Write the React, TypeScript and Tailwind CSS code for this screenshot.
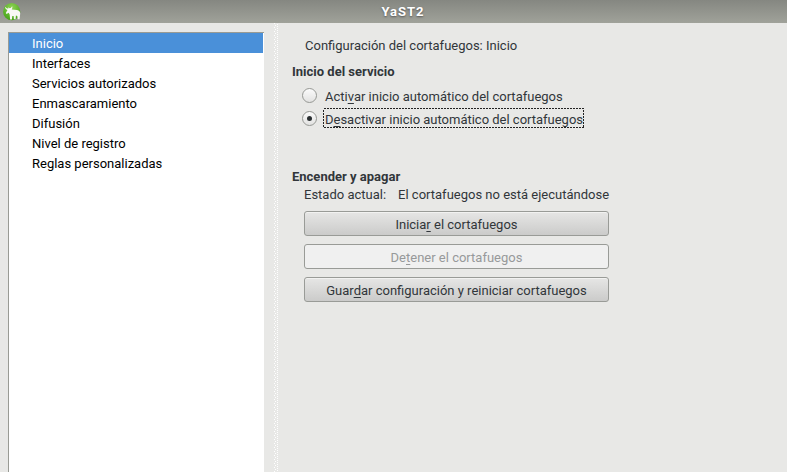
import type { ReactNode } from "react";

const items = [
  "Inicio",
  "Interfaces",
  "Servicios autorizados",
  "Enmascaramiento",
  "Difusión",
  "Nivel de registro",
  "Reglas personalizadas",
];

function Key({ children }: { children: ReactNode }) {
  return (
    <span className="underline decoration-1 underline-offset-2 [text-decoration-skip-ink:none]">{children}</span>
  );
}

function Radio({ checked }: { checked?: boolean }) {
  return (
    <span className="flex size-[15px] shrink-0 items-center justify-center rounded-full border border-[#969894] bg-linear-to-b from-[#fbfbfb] to-[#e2e2e1]">
      {checked && <span className="size-[5px] rounded-full bg-[#2a2f31]" />}
    </span>
  );
}

function Button({ children, disabled }: { children: ReactNode; disabled?: boolean }) {
  return (
    <button
      disabled={disabled}
      className={
        "flex h-[25px] w-[305px] items-center justify-center rounded-[3px] border border-[#999b97] pt-[2px] leading-5 " +
        (disabled
          ? "bg-[#f0f0f0] text-[#97999a]"
          : "bg-linear-to-b from-[#e6e6e5] to-[#cbcbca] shadow-[inset_0_1px_0_#f2f2f1]")
      }
    >
      <span>{children}</span>
    </button>
  );
}

function Logo() {
  return (
    <svg viewBox="0 0 18 18" className="size-[18px] shrink-0">
      <defs>
        <radialGradient id="green" cx=".5" cy=".25" r=".8">
          <stop offset="0" stopColor="#8fd055" />
          <stop offset=".6" stopColor="#5cb52a" />
          <stop offset="1" stopColor="#43a015" />
        </radialGradient>
      </defs>
      <circle cx="8.700" cy="8.700" r="8.600" fill="url(#green)" />
      <path
        fill="#f8f8f5"
        d="M2 3.800C3.200 5.100 4.300 5.600 5.400 5.600L5.300 4.200 6.600 5.200 7.800 5 9.200 3.200C9.500 4.500 9.300 5.700 8.600 6.500L14 6.900C16.200 7.200 17.200 8.600 17.200 10.600L16.600 16.300H14.700L14.300 12.900 12.900 12.600 12.600 16.300H10.900L10.600 13 9.300 12.900 8.900 16.500H7.100L6.700 11.600 5.600 9.800 3.600 11.100 2.800 10 4.500 7C3 6.400 2 5.300 2 3.800Z"
      />
    </svg>
  );
}

export default function App() {
  return (
    <div className="flex h-[472px] w-[787px] flex-col overflow-hidden bg-[#e8e8e6] font-[Roboto,sans-serif] text-[13px] leading-5 text-[#31363a]">
      <header className="flex h-[23px] shrink-0 items-center bg-linear-to-b from-[#858781] to-[#a0a29a] pl-[3px]">
        <Logo />
        <h1 className="flex-1 pr-[2px] text-center text-[13px] font-bold tracking-[1px] text-white [text-shadow:0_1px_2px_#555]">YaST2</h1>
      </header>
      <div className="flex min-h-0 flex-1">
        <nav className="mt-[9px] ml-2 w-[256px] border-t border-l border-[#999b94] bg-white text-black">
          {items.map((item, i) => (
            <div
              key={item}
              className={"h-5 pl-[23px] pt-px " + (i === 0 ? "mr-px bg-[#4a90d9] text-white" : "")}
            >
              {item}
            </div>
          ))}
        </nav>
        <svg className="ml-[10px] w-[5px] shrink-0" height="449">
          <pattern id="grip" width="5" height="4" patternUnits="userSpaceOnUse">
            <path d="M0 0h1v1H0zM1 2h1v1H1zM3 1h1v1H3zM3 3h1v1H3z" fill="#fff" />
          </pattern>
          <rect width="5" height="449" fill="url(#grip)" />
        </svg>
        <main className="ml-[13px] pt-[13px]">
          <p className="ml-[13px]">Configuración del cortafuegos: Inicio</p>
          <h2 className="mt-[6px] font-bold">Inicio del servicio</h2>
          <div className="mt-[4px] ml-[10px] flex h-5 items-start">
            <span className="pt-[2px]"><Radio /></span>
            <span className="ml-2 h-5 pt-px leading-5">Acti<Key>v</Key>ar inicio automático del cortafuegos</span>
          </div>
          <div className="mt-[3px] ml-[10px] flex h-5 items-start">
            <span className="pt-[2px]"><Radio checked /></span>
            <span className="relative ml-[6px] h-5 w-[261px] pt-px pl-[2px] leading-5 tracking-[-0.01px] whitespace-nowrap">
              D<Key>e</Key>sactivar inicio automático del cortafuegos
              <svg className="absolute -top-px left-0" width="261" height="20" shapeRendering="crispEdges">
                <rect x=".5" y=".5" width="260" height="19" fill="none" stroke="#222" strokeDasharray="2 1" />
              </svg>
            </span>
          </div>
          <h2 className="mt-[38px] font-bold">Encender y apagar</h2>
          <p className="ml-3 flex h-[18px] gap-3 leading-4">
            <span>Estado actual:</span>
            <span>El cortafuegos no está ejecutándose</span>
          </p>
          <div className="mt-[6px] ml-3 flex flex-col gap-2">
            <Button>Inicia<Key>r</Key> el cortafuegos</Button>
            <Button disabled>De<Key>t</Key>ener el cortafuegos</Button>
            <Button>Guar<Key>d</Key>ar configuración y reiniciar cortafuegos</Button>
          </div>
        </main>
      </div>
    </div>
  );
}
